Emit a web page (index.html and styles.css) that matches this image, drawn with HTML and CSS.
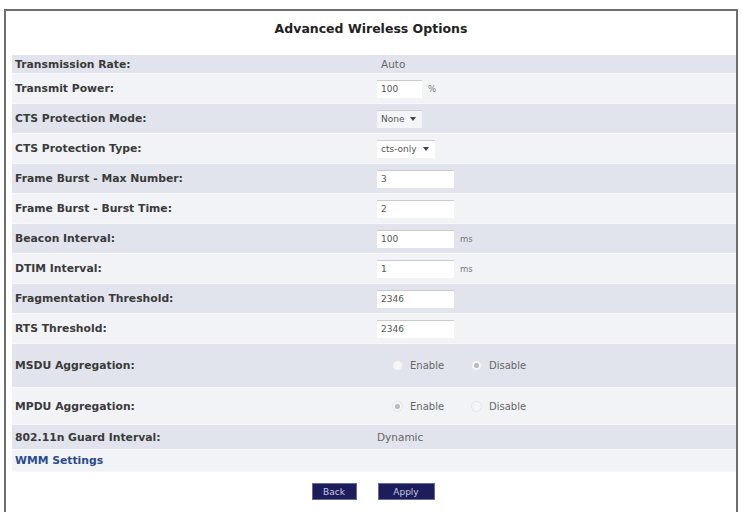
FILE: index.html
```html
<!DOCTYPE html>
<html lang="en">
<head>
    <meta charset="UTF-8">
    <title>Advanced Wireless Options</title>
    <link rel="stylesheet" href="styles.css">
</head>
<body>
    <div class="frame">
        <h1>Advanced Wireless Options</h1>

        <div class="options">
            <div class="row dark short">
                <div class="label">Transmission Rate:</div>
                <div class="value text">Auto</div>
            </div>
            <div class="row light">
                <div class="label">Transmit Power:</div>
                <div class="value"><span class="field small">100</span><span class="unit">%</span></div>
            </div>
            <div class="row dark">
                <div class="label">CTS Protection Mode:</div>
                <div class="value"><span class="select">None <i class="caret"></i></span></div>
            </div>
            <div class="row light">
                <div class="label">CTS Protection Type:</div>
                <div class="value"><span class="select white">cts-only <i class="caret"></i></span></div>
            </div>
            <div class="row dark">
                <div class="label">Frame Burst - Max Number:</div>
                <div class="value"><span class="field">3</span></div>
            </div>
            <div class="row light">
                <div class="label">Frame Burst - Burst Time:</div>
                <div class="value"><span class="field">2</span></div>
            </div>
            <div class="row dark">
                <div class="label">Beacon Interval:</div>
                <div class="value"><span class="field">100</span><span class="unit">ms</span></div>
            </div>
            <div class="row light">
                <div class="label">DTIM Interval:</div>
                <div class="value"><span class="field">1</span><span class="unit">ms</span></div>
            </div>
            <div class="row dark">
                <div class="label">Fragmentation Threshold:</div>
                <div class="value"><span class="field">2346</span></div>
            </div>
            <div class="row light">
                <div class="label">RTS Threshold:</div>
                <div class="value"><span class="field">2346</span></div>
            </div>
            <div class="row dark tall">
                <div class="label">MSDU Aggregation:</div>
                <div class="value radios">
                    <span class="radio"></span><span class="opt">Enable</span>
                    <span class="radio on"></span><span class="opt">Disable</span>
                </div>
            </div>
            <div class="row light mid">
                <div class="label">MPDU Aggregation:</div>
                <div class="value radios">
                    <span class="radio on"></span><span class="opt">Enable</span>
                    <span class="radio"></span><span class="opt">Disable</span>
                </div>
            </div>
            <div class="row dark guard">
                <div class="label">802.11n Guard Interval:</div>
                <div class="value">Dynamic</div>
            </div>
            <div class="row light wmm">
                <div class="label link">WMM Settings</div>
            </div>
        </div>

        <div class="buttons">
            <button class="back">Back</button>
            <button class="apply">Apply</button>
        </div>
    </div>
</body>
</html>
```

FILE: styles.css
```css
body {
    margin: 0;
    background: #fff;
    font-family: "DejaVu Sans", Verdana, sans-serif;
}
.frame {
    margin: 9px 5px 0 4px;
    border: 2px solid #6e6e6e;
    border-bottom: none;
    height: 520px;
    box-sizing: border-box;
}
h1 {
    margin: 0;
    height: 44px;
    line-height: 36px;
    text-align: center;
    font-size: 12.5px;
    color: #222;
}
.options {
    margin: 0 0 0 6px;
}
.row {
    display: flex;
    align-items: center;
    height: 30px;
    border-bottom: 1px solid #f7f8fa;
    box-sizing: border-box;
}
.row.short { height: 19px; }
.row.tall { height: 44px; }
.row.mid { height: 37px; }
.row.guard { height: 25px; }
.row.wmm { height: 22px; }
.dark {
    background-color: #e1e4ec;
}
.light {
    background-color: #f2f3f7;
}
.label {
    width: 362px;
    padding-left: 3px;
    font-size: 10.8px;
    font-weight: bold;
    color: #3a3a3a;
}
.label.link {
    color: #2b4b8c;
}
.value {
    display: flex;
    align-items: center;
    font-size: 10.5px;
    color: #666;
}
.value.text {
    padding-left: 4px;
}
.field {
    display: inline-block;
    width: 73px;
    height: 17px;
    line-height: 17px;
    padding-left: 4px;
    background: #fff;
    border-top: 1px solid #c9cbd0;
    font-size: 9px;
    color: #555;
}
.field.small {
    width: 41px;
}
.unit {
    margin-left: 6px;
    font-size: 8.5px;
    color: #777;
}
.select {
    display: inline-flex;
    align-items: center;
    height: 17px;
    padding: 0 6px 0 4px;
    border-top: 1px solid #cfd1d6;
    background: #f4f5f8;
    font-size: 9px;
    color: #555;
}
.select.white {
    background: #fff;
}
.caret {
    display: inline-block;
    margin-left: 6px;
    border-left: 3px solid transparent;
    border-right: 3px solid transparent;
    border-top: 4px solid #444;
}
.radios {
    padding-left: 15px;
}
.radio {
    display: inline-block;
    width: 9px;
    height: 9px;
    border-radius: 50%;
    border: 1px solid #e4e5e9;
    background: #f6f6f8;
    position: relative;
}
.radio.on::after {
    content: "";
    position: absolute;
    left: 2px;
    top: 2px;
    width: 5px;
    height: 5px;
    border-radius: 50%;
    background: #b8b9c0;
}
.opt {
    margin-left: 7px;
    width: 61px;
    font-size: 10px;
    color: #666;
}
.buttons {
    display: flex;
    justify-content: center;
    gap: 21px;
    margin-top: 11px;
    padding-left: 4px;
}
button {
    height: 17px;
    padding: 0;
    background-color: #1d1d5c;
    border: 1px solid #6a6a98;
    color: #c9cbe2;
    font-family: "DejaVu Sans", Verdana, sans-serif;
    font-size: 9px;
}
button.back { width: 45px; }
button.apply { width: 57px; }
```
